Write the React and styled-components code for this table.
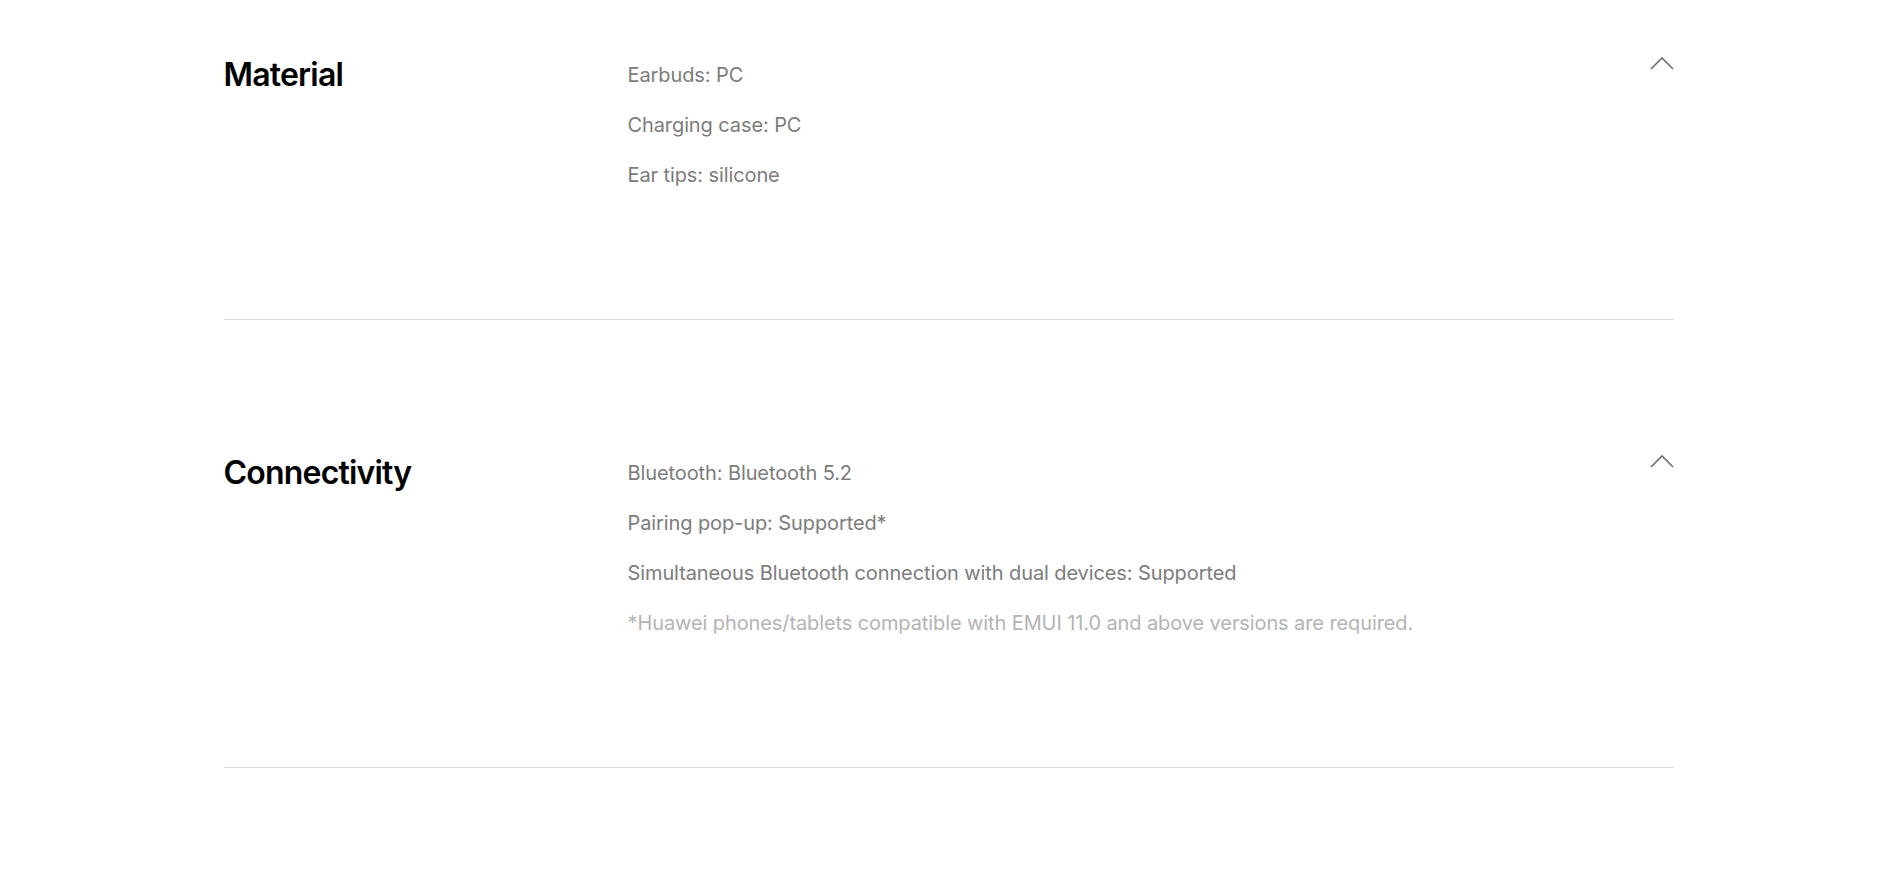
import React from "react";
import styled, { createGlobalStyle } from "styled-components";

const Global = createGlobalStyle`
  html, body { margin: 0; padding: 0; background: #fff; }
  body { font-family: Inter, "Noto Sans", "Liberation Sans", sans-serif; overflow: hidden; }
`;

const Page = styled.div`
  width: 1450px;
  margin: 0 auto;
`;

const Section = styled.section`
  display: grid;
  grid-template-columns: 404px 1fr 24px;
  align-items: start;
  padding: 128px 0 119px;
  border-bottom: 1px solid #dcdcdc;
  &:first-child { padding-top: 50px; }
`;

const Title = styled.h2`
  margin: 0;
  font-size: 32px;
  font-weight: 600;
  line-height: 50px;
  color: #000;
  letter-spacing: -0.8px;
`;

const Specs = styled.div`
  display: flex;
  flex-direction: column;
`;

const Spec = styled.p`
  margin: 0;
  font-size: 20px;
  line-height: 50px;
  letter-spacing: -0.1px;
  color: ${(p) => (p.$note ? "#b4b4b4" : "#7c7c7c")};
`;

const Toggle = styled.button`
  border: 0;
  background: none;
  padding: 0;
  margin-top: 6px;
  width: 24px;
  height: 14px;
  cursor: pointer;
  color: #6f6f6f;
  display: flex;
`;

function Chevron() {
  return (
    <svg width="24" height="14" viewBox="0 0 24 14" fill="none">
      <path d="M1 13 L12 2 L23 13" stroke="currentColor" strokeWidth="1.6" />
    </svg>
  );
}

const data = [
  {
    title: "Material",
    items: ["Earbuds: PC", "Charging case: PC", "Ear tips: silicone"],
  },
  {
    title: "Connectivity",
    items: [
      "Bluetooth: Bluetooth 5.2",
      "Pairing pop-up: Supported*",
      "Simultaneous Bluetooth connection with dual devices: Supported",
    ],
    note: "*Huawei phones/tablets compatible with EMUI 11.0 and above versions are required.",
  },
];

export default function App() {
  return (
    <>
      <Global />
      <Page>
        {data.map((s) => (
          <Section key={s.title}>
            <Title>{s.title}</Title>
            <Specs>
              {s.items.map((t) => (
                <Spec key={t}>{t}</Spec>
              ))}
              {s.note && <Spec $note>{s.note}</Spec>}
            </Specs>
            <Toggle aria-label="Collapse">
              <Chevron />
            </Toggle>
          </Section>
        ))}
      </Page>
    </>
  );
}
